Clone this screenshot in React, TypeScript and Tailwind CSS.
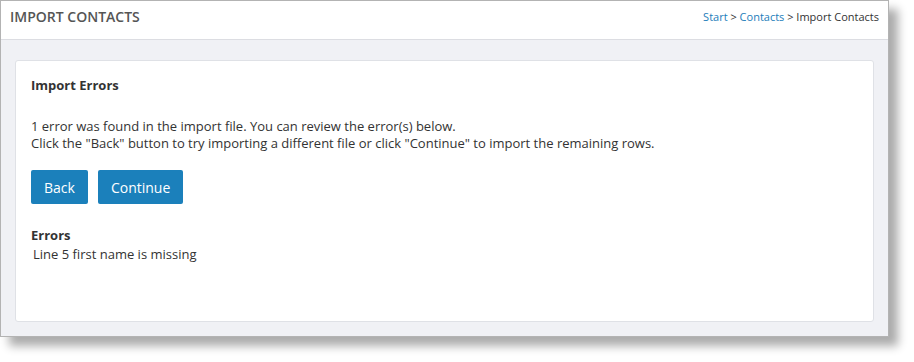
export default function App() {
  return (
    <div className="w-[914px] h-[362px] bg-white font-['Open_Sans',sans-serif] text-[#333]">
      <div className="w-[889px] h-[337px] border border-[#b3b3b3] flex flex-col shadow-[9px_9px_9px_rgba(0,0,0,0.33)]">
        <div className="h-[39px] shrink-0 bg-white border-b border-[#dcdde2] flex justify-between items-start px-[9px] pt-[5px]">
          <h1 className="text-[14px] font-semibold text-[#555]">IMPORT CONTACTS</h1>
          <div className="text-[11px] text-[#333] pt-[3px]">
            <a className="text-[#1c7dba]">Start</a> &gt; <a className="text-[#1c7dba]">Contacts</a> &gt; Import Contacts
          </div>
        </div>
        <div className="flex-1 bg-[#f0f1f5] px-[14px] pt-[20px] pb-[14px] flex">
          <div className="flex-1 bg-white border border-[#dfe1e6] rounded-[3px] px-[15px] pt-[15px]">
            <h2 className="text-[13px] font-bold leading-[18px]">Import Errors</h2>
            <p className="text-[13px] leading-[17px] mt-[24px]">
              1 error was found in the import file. You can review the error(s) below.
              <br />
              Click the "Back" button to try importing a different file or click "Continue" to import the remaining rows.
            </p>
            <div className="flex gap-[10px] mt-[18px]">
              <button className="h-[34px] px-[13px] bg-[#1b80bb] text-white text-[14px] rounded-[2px]">Back</button>
              <button className="h-[34px] px-[13px] bg-[#1b80bb] text-white text-[14px] rounded-[2px]">Continue</button>
            </div>
            <h3 className="text-[13px] font-bold leading-[18px] mt-[22px]">Errors</h3>
            <p className="text-[13px] leading-[18px] pl-[2px] mt-[1px]">Line 5 first name is missing</p>
          </div>
        </div>
      </div>
    </div>
  )
}
